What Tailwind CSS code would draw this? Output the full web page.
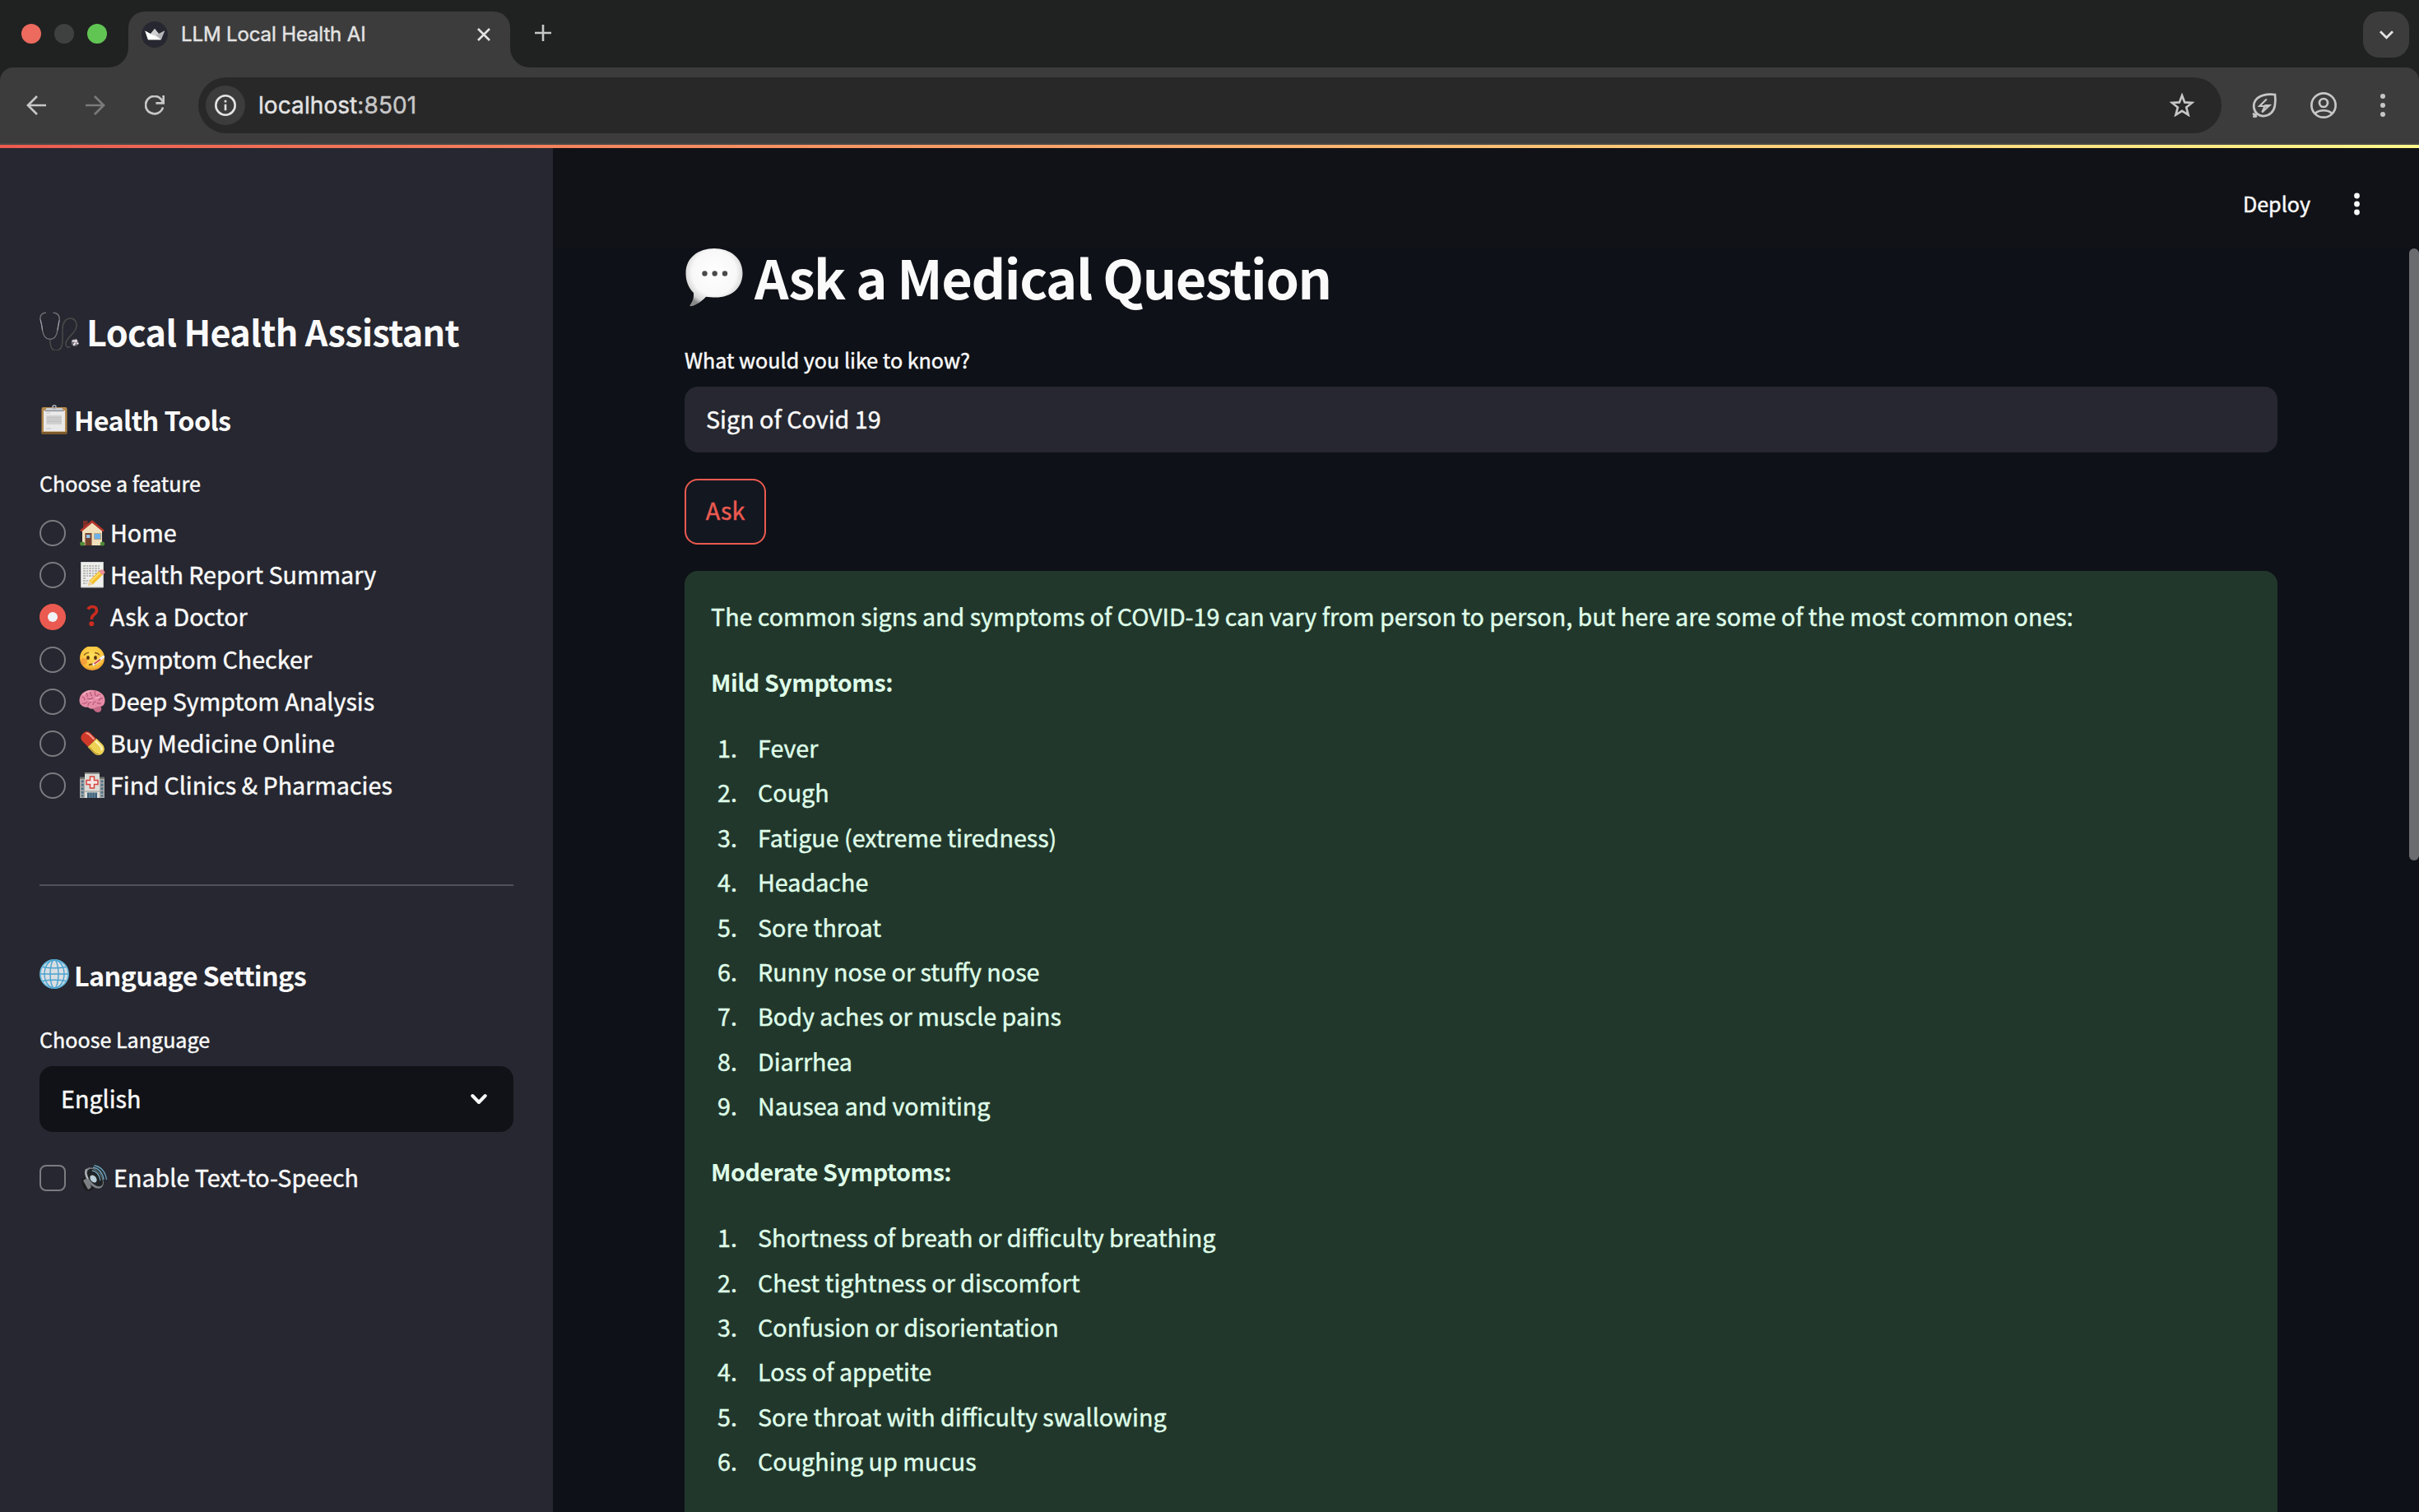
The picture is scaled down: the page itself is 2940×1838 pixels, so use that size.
<!DOCTYPE html>
<html lang="en">
<head>
<meta charset="utf-8">
<title>LLM Local Health AI</title>
<script src="https://cdn.jsdelivr.net/npm/@tailwindcss/browser@4"></script>
</head>
<body class="flex h-[1838px] w-[2940px] flex-col overflow-hidden bg-[#0e1117] font-['Noto_Sans_CJK_SC',sans-serif] text-[28.68px] text-[#fafafa] [-webkit-text-stroke:0.45px]">

<!-- Browser tab strip -->
<div class="flex h-[82px] shrink-0 items-start bg-[#202221] pt-[14px] font-['Inter',sans-serif]">
  <div class="flex items-center gap-4 pl-[26px] pt-[15px]">
    <div class="size-6 rounded-full bg-[#ed6a5e]"></div>
    <div class="size-6 rounded-full bg-[#3f4140]"></div>
    <div class="size-6 rounded-full bg-[#61c554]"></div>
  </div>
  <div class="relative ml-[26px] flex h-[68px] w-[464px] items-start rounded-t-[20px] bg-[#3c3c3c]">
    <svg class="absolute -left-6 bottom-0 size-6" viewBox="0 0 24 24"><path d="M24 0v24H0A24 24 0 0 0 24 0z" fill="#3c3c3c"/></svg>
    <svg class="absolute -right-6 bottom-0 size-6" viewBox="0 0 24 24"><path d="M0 0v24h24A24 24 0 0 1 0 0z" fill="#3c3c3c"/></svg>
    <svg class="ml-4 mt-3 size-8" viewBox="0 0 32 32"><circle cx="16" cy="16" r="16" fill="#262730"/><path d="M4.300 11.500 11 15.200 16 9l5 6.200 7-3.700-4.300 10.700H8z" fill="#e9e9ea"/><path d="M16 9l5 6.200-3 2.300-7-2.300z" fill="#cfcfd1"/><path d="M28 11.500 23.700 22.200 17.500 16.800z" fill="#b3b3b7"/><path d="M4.300 11.500 23.700 22.200H8z" fill="#fff"/></svg>
    <div class="ml-[16px] mt-[12px] w-[360px] text-[24px] leading-[32px] tracking-[-0.13px] text-[#e3e3e3]">LLM Local Health AI</div>
    <svg class="mt-[20px] size-4" viewBox="0 0 16 16" fill="none" stroke="#e3e3e3" stroke-width="2.600"><path d="M1 1l14 14M15 1L1 15"/></svg>
  </div>
  <svg class="ml-[30px] mt-[16px] size-5" viewBox="0 0 20 20" fill="none" stroke="#c7c7c7" stroke-width="2.600"><path d="M10 0v20M0 10h20"/></svg>
  <div class="ml-auto mr-3 flex size-14 items-center justify-center rounded-[20px] bg-[#3c3c3c]">
    <svg class="h-[11px] w-[17px]" viewBox="0 0 17 11" fill="none" stroke="#e3e3e3" stroke-width="2.800"><path d="M1 1.300l7.500 7.500L16 1.300"/></svg>
  </div>
</div>

<!-- Toolbar -->
<div class="flex h-[94px] shrink-0 bg-[#202221] font-['Inter',sans-serif]">
<div class="flex w-full items-center rounded-t-[16px] border-b-2 border-[#474747] bg-[#3c3c3c]">
  <svg class="ml-8 size-6" viewBox="0 0 24 24" fill="none" stroke="#c7c7c7" stroke-width="2.700"><path d="M24 12H2M13 1L2 12l11 11"/></svg>
  <svg class="ml-12 size-6" viewBox="0 0 24 24" fill="none" stroke="#7a7a7a" stroke-width="2.700"><path d="M0 12h22M11 1l11 11-11 11"/></svg>
  <svg class="ml-12 size-6" viewBox="0 0 24 24" fill="none" stroke="#c7c7c7" stroke-width="2.700"><path d="M22 14.500A10.700 10.700 0 1 1 20 4.800l2 3"/><path d="M22.700 0v9.300h-9.300"/></svg>
  <div class="ml-[41px] flex h-[68px] w-[2459px] items-center rounded-full bg-[#282828] pl-[9px] pr-[33px]">
    <div class="flex size-12 items-center justify-center rounded-full bg-[#3c3c3c]">
      <svg class="size-[26px]" viewBox="0 0 26 26" fill="none" stroke="#e3e3e3" stroke-width="2.600"><circle cx="13" cy="13" r="11.700"/><path d="M13 11.700v7.600M13 6.700v2.700"/></svg>
    </div>
    <div class="ml-[16px] text-[28px] leading-[40px] tracking-[0.08px] text-[#e3e3e3]">localhost<span class="text-[#c7c7c7]">:8501</span></div>
    <svg class="ml-auto mb-[2px] h-[29px] w-[30px]" viewBox="0 0 30 29" fill="none" stroke="#c7c7c7" stroke-width="2.600"><path d="M15 3l3.200 8.400 9 .5-7 5.700 2.400 9L15 21.800l-7.600 4.800 2.400-9-7-5.700 9-.5z"/></svg>
  </div>
  <svg class="ml-[36px] size-[32px]" viewBox="0 0 32 32" fill="none" stroke="#c7c7c7" stroke-width="2.700"><path d="M29 3c-4-.4-9-.6-13.500.6C7.500 5.500 2.500 11 3.300 18.500c.4 3.300 1.700 5.700 3.700 7.600 2 1.900 5 3 8 3C22 29 27.500 24 28.800 16.500 29.600 12 29.600 7.500 29 3zM7.200 26 2.600 30.500M2.200 25.800l4.500 4.600"/><path d="M18.800 8.500 10.300 17h6l-1.500 1 7-1.700M16.500 17.500l-3.200 7 9-8.300h-6" stroke-width="2.200"/></svg>
  <svg class="ml-[40px] size-8" viewBox="0 0 32 32" fill="none" stroke="#c7c7c7" stroke-width="2.700"><circle cx="16" cy="16" r="14.650"/><circle cx="16" cy="13" r="5"/><path d="M5.500 26c5.500-5 15.500-5 21 0"/></svg>
  <svg class="ml-[53px] h-8 w-[6px]" viewBox="0 0 6 32" fill="#c7c7c7"><circle cx="3" cy="5" r="3"/><circle cx="3" cy="16" r="3"/><circle cx="3" cy="27" r="3"/></svg>
</div>
</div>

<div class="h-1 shrink-0 bg-linear-to-r from-[#eb5a50] to-[#fcf88a]"></div>

<div class="flex min-h-0 flex-1">
  <!-- Sidebar -->
  <aside class="w-[672px] shrink-0 bg-[#262730] px-12 pt-[193px]">
    <div class="flex h-[58px] items-center">
      <svg class="h-[48px] w-[48px] shrink-0" viewBox="0 0 48 48" fill="none" stroke-linecap="round"><path d="M7.500 2.200C3 2.500 0 5.500 1.200 11c1 4 1.800 7 2.300 12C4.500 30 8 34.500 13 34.500S21 30 22 23c.4-4 1.300-7.500 2-11C25 5.500 22 2.500 17 2.200" stroke="#77797e" stroke-width="1.300"/><path d="M1.200 11c1 4 1.800 7 2.300 12M24 12c-.7 3.500-1.600 7-2 11" stroke="#a9abb2" stroke-width="1"/><path d="M13 35C12.500 43 15 48 20 48s8-4.500 8-12V22c0-8 4-13 9.500-13s8 4.500 7.500 9.500C44 28 33.500 31 32 39c-.5 4 2 6 5 4.500" stroke="#4c4b4a" stroke-width="1.500"/><circle cx="43" cy="38.500" r="4.700" fill="#6c6a72" stroke="#34343a"/><path d="M40.500 36.500h2M44.500 35.500v2M42 41l1-1.500M46 39.500h.5" stroke="#f3e9ee" stroke-width="2.200"/></svg>
      <h1 class="ml-[9px] text-[43.2px] leading-[58px] font-bold tracking-[-0.67px] whitespace-nowrap [-webkit-text-stroke:0]">Local Health Assistant</h1>
    </div>
    <div class="mt-[57px] flex h-[44px] items-center">
      <svg class="h-[36px] w-[36px] shrink-0" viewBox="0 0 36 36"><rect x="2.500" y="3" width="31" height="33" rx="2" fill="#b58a4c"/><rect x="2.500" y="33" width="31" height="3" rx="1" fill="#7d5a2b"/><path d="M5 7h26v25.500H5z" fill="#e9e9e9"/><path d="M8.500 13h18.500v11H8.500z" fill="#cfcfcf"/><path d="M8.500 15.500H27M8.500 18H26M8.500 20.500H27" stroke="#bcbcbc" stroke-width=".8"/><path d="M8 10h5M8 29h6" stroke="#bdbdbd" stroke-width=".8"/><path d="M6.500 7.500 8.500 4h19l2 3.500z" fill="#c8cbd1"/><path d="M6.500 7.500h23" stroke="#7e8188"/><circle cx="18" cy="2.800" r="2" fill="none" stroke="#a9adb8" stroke-width="1.600"/></svg>
      <h2 class="ml-[6px] text-[32.4px] leading-[44px] font-bold tracking-[-0.65px] [-webkit-text-stroke:0]">Health Tools</h2>
    </div>
    <div class="mt-[38px] h-[34px] text-[25.1px] leading-[34px]">Choose a feature</div>
    <div class="mt-[18.4px] flex flex-col">
      <label class="flex h-[51.2px] items-center"><span class="size-8 rounded-full border-2 border-[#7b7c81]"></span>
        <svg class="ml-4 size-[32px]" viewBox="0 0 32 32"><path d="M5 1h5.500v9H5z" fill="#7d2f2a"/><path d="M4 13 16 3l12 10v18H4z" fill="#f1e0bb"/><path d="M2 13.500 16 2l14 11.500" fill="none" stroke="#b5352c" stroke-width="2.600"/><path d="M7.500 16h8v15h-8z" fill="#74402c"/><path d="M9 18h4.500v4H9z" fill="#8cc5ee"/><path d="M18 16h9v8h-9z" fill="#b9a888"/><path d="M19 17h7v6h-7z" fill="#6cb1ea"/><ellipse cx="4" cy="29" rx="3" ry="2.500" fill="#4f8a36"/><ellipse cx="28.500" cy="29" rx="2.700" ry="2.500" fill="#4f8a36"/></svg>
        <span class="ml-[6px] pb-[3px]">Home</span></label>
      <label class="flex h-[51.2px] items-center"><span class="size-8 rounded-full border-2 border-[#7b7c81]"></span>
        <svg class="ml-4 size-[32px]" viewBox="0 0 32 32"><path d="M2.500 0h27v31h-27z" fill="#eeeeec" stroke="#bfc0c0"/><path d="M5 5h21M5 8h20M5 11h21M5 14h18M5 17h14M5 20h4M5 23h9M5 26h5" stroke="#8a8a8a" stroke-width="1.100" stroke-dasharray="3 1 2 1"/><path d="M11 29l1.500-6L25 10.500l4.500 4.500L17 27.200z" fill="#f4bf2e"/><path d="M11 29l1.500-6 4.500 4.300z" fill="#ecd3a5"/><path d="M13.800 24.500 26.500 12" stroke="#ffe27a" stroke-width="1.500"/><path d="M24 11.500l2.500-2q2-.8 4 1.500t0 3.200L28.500 16z" fill="#ed8f96"/></svg>
        <span class="ml-[6px] pb-[3px]">Health Report Summary</span></label>
      <label class="flex h-[51.2px] items-center"><span class="flex size-8 items-center justify-center rounded-full bg-[#eb5a50]"><span class="size-3 rounded-full bg-[#f0f2f6]"></span></span>
        <svg class="ml-4 size-[32px]" viewBox="0 0 32 32"><path d="M10.800 6.500c1.500-2.300 3.500-3 5.700-3 3.300 0 5 2 5 4.700 0 4.800-6 4.800-6 9.300v1.500" fill="none" stroke="#cb2c20" stroke-width="3.600"/><circle cx="15.300" cy="24.200" r="3" fill="#cb2c20"/></svg>
        <span class="ml-[6px] pb-[3px]">Ask a Doctor</span></label>
      <label class="flex h-[51.2px] items-center"><span class="size-8 rounded-full border-2 border-[#7b7c81]"></span>
        <svg class="ml-4 size-[32px]" viewBox="0 0 32 32"><defs><radialGradient id="face" cx=".5" cy=".4" r=".6"><stop offset="0" stop-color="#ffe15a"/><stop offset=".75" stop-color="#f9c23c"/><stop offset="1" stop-color="#e9962c"/></radialGradient></defs><circle cx="16" cy="14" r="15" fill="url(#face)"/><circle cx="6" cy="18" r="4" fill="#f08a3a" opacity=".6"/><ellipse cx="11" cy="13.500" rx="1.900" ry="2.600" fill="#5b3413"/><ellipse cx="20" cy="13.500" rx="1.900" ry="2.600" fill="#5b3413"/><path d="M6 10.500q3-3.500 6-3M19 7.500q4 0 6 3" fill="none" stroke="#8d5a1d" stroke-width="1.300"/><path d="M12 22.500q4-2 8-.5" fill="none" stroke="#6b3d14" stroke-width="1.600"/><path d="M18 21.500 29.500 12.500" stroke="#eef1f5" stroke-width="3.400" stroke-linecap="round"/><path d="M18.500 21 26 15.500" stroke="#d6453c" stroke-width="1.700"/></svg>
        <span class="ml-[6px] pb-[3px]">Symptom Checker</span></label>
      <label class="flex h-[51.2px] items-center"><span class="size-8 rounded-full border-2 border-[#7b7c81]"></span>
        <svg class="ml-4 size-[32px]" viewBox="0 0 32 32"><path d="M18 20c4-1 8 0 9 3s-1 6-4 6c-3 0-6-4-7-6z" fill="#c46a86"/><path d="M.5 15C0 8 6 2 14.500 1.800 23 1.500 31 6 31.500 13.500c.3 5-2 8.500-6 8.300-3 0-5 1.200-7.500 2.300-3 1.200-5.500.5-7-1.500C7 23.500.8 21 .5 15z" fill="#e58ba6"/><path d="M4 10q3 1 3 4M8 5q3 2 2 5M14 3q-1 4 2 6M20 3q-2 3 1 6M26 7q-4 0-4 4M29 12q-4-1-5 3M4 18q4 1 6-2M11 21q0-4 4-5M17 20q0-4 4-4M10 12q4 2 7-1M27 18q-3 1-5-1" fill="none" stroke="#b65778" stroke-width="1.200"/><path d="M5 8q4-5 10-5M20 12q3-2 5-1M12 15q3-1 4 0" fill="none" stroke="#f9bccb" stroke-width="1.200"/></svg>
        <span class="ml-[6px] pb-[3px]">Deep Symptom Analysis</span></label>
      <label class="flex h-[51.2px] items-center"><span class="size-8 rounded-full border-2 border-[#7b7c81]"></span>
        <svg class="ml-4 size-[32px]" viewBox="0 0 32 32"><g transform="rotate(45 16 15)"><path d="M16 8H5.500a7 7 0 0 0-5.500 7 7 7 0 0 0 5.500 7H16z" fill="#cf3a2a"/><path d="M16 7.500h10.500a7.500 7.500 0 0 1 0 15H16z" fill="#edd254"/><path d="M3 11.500q1.500-1.300 4-1.300h7" fill="none" stroke="#f59a8a" stroke-width="2" stroke-linecap="round"/><path d="M18 10.700h8q2.500 0 4 2" fill="none" stroke="#fff6b8" stroke-width="2.300" stroke-linecap="round"/><path d="M17 21.300h9.500a6.500 6.500 0 0 0 5-2.500" fill="none" stroke="#b8962c" stroke-width="1.300"/></g></svg>
        <span class="ml-[6px] pb-[3px]">Buy Medicine Online</span></label>
      <label class="flex h-[51.2px] items-center"><span class="size-8 rounded-full border-2 border-[#7b7c81]"></span>
        <svg class="ml-4 size-[32px]" viewBox="0 0 32 32"><path d="M1 6h30v25H1z" fill="#a9aaa8"/><path d="M1 5.500h30V8H1z" fill="#70716f"/><path d="M7 0h18v31H7z" fill="#dcdcd9"/><path d="M7 0h18v2H7z" fill="#8b8b89"/><path d="M2.700 9.500h3v20h-3zM26.500 9.500h3v20h-3z" fill="#4f7288"/><path d="M1 13h5M1 17.500h5M1 22h5M1 26.500h5M26 13h5M26 17.500h5M26 22h5M26 26.500h5" stroke="#a9aaa8" stroke-width="1.400"/><path d="M13.500 5h5v4.500H23v5h-4.500V19h-5v-4.500H9v-5h4.500z" fill="#f3e9e7" stroke="#d8453c" stroke-width="1.500"/><path d="M7 22h18v2H7z" fill="#b9b9b6"/><path d="M10 24.500h12V31H10z" fill="#3e6079"/><path d="M13 24.500V31M16 24.500V31M19 24.500V31" stroke="#86a3b4" stroke-width=".8"/></svg>
        <span class="ml-[6px] pb-[3px]">Find Clinics &amp; Pharmacies</span></label>
    </div>
    <hr class="mt-[94.200px] h-[2px] border-0 bg-[#50515a]">
    <div class="mt-[86px] flex h-[44px] items-center">
      <svg class="mb-[2px] h-[36px] w-[36px] shrink-0" viewBox="0 0 36 36" fill="none" stroke="#4ba3d0" stroke-width="1.400"><circle cx="18" cy="18" r="17" fill="#d9dee2" stroke="#6bbbe0" stroke-width="1.800"/><ellipse cx="18" cy="18" rx="12" ry="17"/><ellipse cx="18" cy="18" rx="5" ry="17"/><path d="M1 18h34M4 9.500q14 2.500 28 0M4 26.500q14-2.500 28 0"/></svg>
      <h2 class="ml-[6px] text-[32.4px] leading-[44px] font-bold tracking-[-0.69px] whitespace-nowrap [-webkit-text-stroke:0]">Language Settings</h2>
    </div>
    <div class="mt-[39px] h-[34px] text-[25.1px] leading-[34px]">Choose Language</div>
    <div class="mt-4 flex h-20 items-center justify-between rounded-2xl bg-[#111217] pl-[26px] pr-[32px]">
      <span class="pb-[3px]">English</span>
      <svg class="h-[14px] w-[20px]" viewBox="0 0 20 14" fill="none" stroke="#fafafa" stroke-width="4" stroke-linecap="round" stroke-linejoin="round"><path d="M2.300 3l7.700 8 7.700-8"/></svg>
    </div>
    <label class="mt-10 flex h-8 items-center"><span class="size-8 rounded-lg border-2 border-[#7b7c81]"></span>
      <svg class="ml-[19px] size-[32px]" viewBox="0 0 32 32"><path d="M0 18 6 14 15 29 8 32Q1 30 0 18z" fill="#1c1c1e"/><path d="M2 19q3-3 6-1l4 9q-2 3-4 3z" fill="#7d8083"/><ellipse cx="15.500" cy="16" rx="9" ry="14.500" transform="rotate(-38 15.500 16)" fill="#7d8286"/><ellipse cx="16.500" cy="15.500" rx="7" ry="12.500" transform="rotate(-38 16.500 15.500)" fill="#202325"/><ellipse cx="14.500" cy="17" rx="3.500" ry="5" transform="rotate(-38 14.500 17)" fill="#b9cfd9"/><g fill="none" stroke="#6ba3ba" stroke-width="1.300"><path d="M13 7q8 1 10 12M14 3q11 2 13 15M15.500.5q13 3 15 17.500"/></g><path d="M6 5q-3 4 2 12" fill="none" stroke="#c5c9cc" stroke-width="1.200"/></svg>
      <span class="ml-[7px] pb-[3px]">Enable Text-to-Speech</span></label>
  </aside>

  <!-- Main -->
  <main class="relative flex min-w-0 flex-1 flex-col">
    <header class="flex h-[120px] shrink-0 items-center justify-end bg-[#111217] pr-[72px]">
      <span class="mt-[13px] text-[25.1px] leading-[34px]">Deploy</span>
      <svg class="ml-[53px] mt-4 h-[28px] w-[7px]" viewBox="0 0 7 28" fill="#fafafa"><circle cx="3.500" cy="4" r="3.400"/><circle cx="3.500" cy="14" r="3.400"/><circle cx="3.500" cy="24" r="3.400"/></svg>
    </header>
    <div class="ml-[160px] flex w-[1936px] flex-col items-stretch">
      <div class="flex h-[72px] items-center">
        <svg class="h-[74px] w-[72px] shrink-0" viewBox="0 0 72 74"><defs><radialGradient id="bub" cx=".5" cy=".42" r=".6"><stop offset="0" stop-color="#fff"/><stop offset=".65" stop-color="#f8f8f8"/><stop offset=".88" stop-color="#d2d2d2"/><stop offset="1" stop-color="#8a8a8a"/></radialGradient></defs><path d="M36 3c19 0 34.500 11 34.500 30S56 62.500 38 62.500c-5 0-9-.2-12-.7C21 67 14 72.500 8 73.200c-2 .2-1.800-1-.8-2.200 3-4 4.300-9 3.800-14C5 51 1.500 43 1.500 33 1.500 14 17 3 36 3z" fill="url(#bub)"/><circle cx="24.500" cy="33.500" r="3.200" fill="#4a4a4a"/><circle cx="36.700" cy="33.500" r="3.200" fill="#4a4a4a"/><circle cx="49" cy="33.500" r="3.200" fill="#4a4a4a"/></svg>
        <h1 class="ml-[13px] text-[64.8px] leading-[72px] font-bold tracking-[-1.39px] whitespace-nowrap [-webkit-text-stroke:0]">Ask a Medical Question</h1>
      </div>
      <div class="mt-12 h-[34px] text-[25.1px] leading-[34px]">What would you like to know?</div>
      <div class="mt-4 flex h-20 items-center rounded-2xl bg-[#262730] px-[26px] pb-[3px]">Sign of Covid 19</div>
      <div class="mt-8 flex h-20 w-[99px] items-center justify-center rounded-2xl border-2 border-[#eb5a50] bg-[#131720] pb-[5px] text-[#eb5a50]">Ask</div>
      <div class="mt-8 flex h-[1200px] flex-col gap-[28.8px] rounded-2xl bg-[#22372b] px-8 pt-[29px] leading-[51.2px] text-[#dffde9]">
        <p class="text-[28.64px] whitespace-nowrap">The common signs and symptoms of COVID-19 can vary from person to person, but here are some of the most common ones:</p>
        <p class="font-bold tracking-[-0.46px] [-webkit-text-stroke:0]">Mild Symptoms:</p>
        <ol class="flex flex-col gap-[3.2px]">
          <li class="flex"><span class="w-[57px] pl-[8px]">1.</span>Fever</li>
          <li class="flex"><span class="w-[57px] pl-[8px]">2.</span>Cough</li>
          <li class="flex"><span class="w-[57px] pl-[8px]">3.</span>Fatigue (extreme tiredness)</li>
          <li class="flex"><span class="w-[57px] pl-[8px]">4.</span>Headache</li>
          <li class="flex"><span class="w-[57px] pl-[8px]">5.</span>Sore throat</li>
          <li class="flex"><span class="w-[57px] pl-[8px]">6.</span>Runny nose or stuffy nose</li>
          <li class="flex"><span class="w-[57px] pl-[8px]">7.</span>Body aches or muscle pains</li>
          <li class="flex"><span class="w-[57px] pl-[8px]">8.</span>Diarrhea</li>
          <li class="flex"><span class="w-[57px] pl-[8px]">9.</span>Nausea and vomiting</li>
        </ol>
        <p class="font-bold tracking-[-0.46px] [-webkit-text-stroke:0]">Moderate Symptoms:</p>
        <ol class="flex flex-col gap-[3.2px]">
          <li class="flex"><span class="w-[57px] pl-[8px]">1.</span>Shortness of breath or difficulty breathing</li>
          <li class="flex"><span class="w-[57px] pl-[8px]">2.</span>Chest tightness or discomfort</li>
          <li class="flex"><span class="w-[57px] pl-[8px]">3.</span>Confusion or disorientation</li>
          <li class="flex"><span class="w-[57px] pl-[8px]">4.</span>Loss of appetite</li>
          <li class="flex"><span class="w-[57px] pl-[8px]">5.</span>Sore throat with difficulty swallowing</li>
          <li class="flex"><span class="w-[57px] pl-[8px]">6.</span>Coughing up mucus</li>
        </ol>
      </div>
    </div>
    <div class="absolute right-0 top-[122px] h-[744px] w-3 rounded-full bg-[#6b6c70]"></div>
  </main>
</div>
</body>
</html>
